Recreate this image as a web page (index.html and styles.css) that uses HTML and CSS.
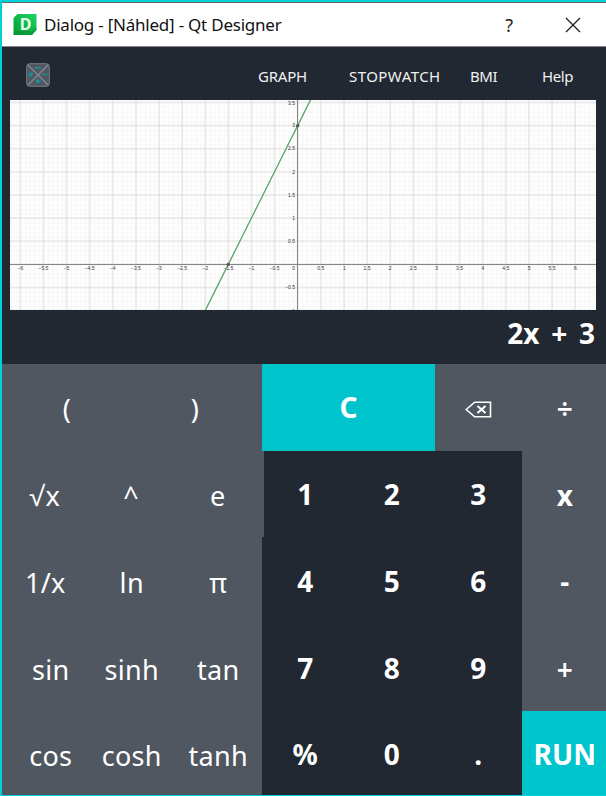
FILE: index.html
```html
<!DOCTYPE html>
<html lang="cs">
<head>
<meta charset="utf-8">
<title>Dialog</title>
<link rel="stylesheet" href="styles.css">
</head>
<body>
<div class="window">
  <header class="titlebar">
    <svg class="app-icon" width="24" height="22" viewBox="0 0 24 22">
      <defs><linearGradient id="g" x1="0" y1="1" x2="1" y2="0"><stop offset="0" stop-color="#009b2e"/><stop offset="1" stop-color="#1fd565"/></linearGradient></defs>
      <path d="M4.5 0H23.5V16L19 21H.5V4Z" fill="url(#g)"/>
      <path d="M.5 20L4 17H19L23.5 13V16L19 21H.5Z" fill="#078a38" opacity=".5"/>
      <text class="app-letter" x="6.8" y="16">D</text>
    </svg>
    <h1 class="title">Dialog - [Náhled] - Qt Designer</h1>
    <span class="help">?</span>
    <svg class="close" width="16" height="16" viewBox="0 0 16 16"><path d="M1 1L15 15M15 1L1 15" stroke="#222" stroke-width="1.3"/></svg>
  </header>
  <nav class="menu">
    <svg class="calc-icon" width="24" height="24" viewBox="0 0 24 24">
      <rect x=".7" y=".7" width="22.6" height="22.6" rx="3" fill="#505761" stroke="#777d86"/>
      <path d="M2 2L22 22M22 2L2 22" stroke="#858a91" stroke-width="1.3"/>
      <path d="M9 4.8H15M16 11.5H21.5M9.5 18H14.5M12 15.5V20.5M3 9.5L6.5 13.5M6.5 9.5L3 13.5" stroke="#15959f" stroke-width="1.6"/>
    </svg>
    <span class="item graph-item">GRAPH</span>
    <span class="item watch-item">STOPWATCH</span>
    <span class="item bmi-item">BMI</span>
    <span class="item help-item">Help</span>
  </nav>
  <svg class="plot" width="585.5" height="209.7" viewBox="0 0 585.5 209.7">
    <defs>
      <pattern id="minor" x="287.7" y="164.3" width="4.624" height="4.624" patternUnits="userSpaceOnUse"><path d="M0 0H4.624M0 0V4.624" stroke="#f1f1f1" stroke-width="1"/></pattern>
      <pattern id="major" x="276.14" y="152.74" width="23.12" height="23.12" patternUnits="userSpaceOnUse"><path d="M0 11.56H23.12M11.56 0V23.12" stroke="#dcdcdc" stroke-width="1"/></pattern>
    </defs>
    <rect width="586" height="210" fill="#fefefe"/>
    <rect width="586" height="210" fill="url(#minor)"/>
    <rect width="586" height="210" fill="url(#major)"/>
    <path d="M0 164.5H586M287.5 0V210" stroke="#858585" stroke-width="1"/>
    <g class="x-labels">
      <text x="10.3" y="170">−6</text><text x="33.4" y="170">−5.5</text><text x="56.5" y="170">−5</text><text x="79.6" y="170">−4.5</text><text x="102.8" y="170">−4</text><text x="125.9" y="170">−3.5</text><text x="149" y="170">−3</text><text x="172.1" y="170">−2.5</text><text x="195.2" y="170">−2</text><text x="218.3" y="170">−1.5</text><text x="241.5" y="170">−1</text><text x="264.6" y="170">−0.5</text><text x="283.6" y="170">0</text><text x="310.8" y="170">0.5</text><text x="334.5" y="170">1</text><text x="357" y="170">1.5</text><text x="380.2" y="170">2</text><text x="403.3" y="170">2.5</text><text x="426.6" y="170">3</text><text x="449.5" y="170">3.5</text><text x="473" y="170">4</text><text x="495.8" y="170">4.5</text><text x="519.2" y="170">5</text><text x="542" y="170">5.5</text><text x="565.3" y="170">6</text>
    </g>
    <g class="y-labels">
      <text x="285" y="4.7">3.5</text><text x="285" y="27.4">3</text><text x="285" y="50.5">2.5</text><text x="285" y="73.6">2</text><text x="285" y="96.8">1.5</text><text x="285" y="119.9">1</text><text x="285" y="143">0.5</text><text x="285" y="189">−0.5</text><text x="285" y="212.7">−1</text>
    </g>
    <path d="M195.2 210.5L301.2 -1.5" stroke="#55a066" stroke-width="1.3"/>
    <circle cx="218.3" cy="164.4" r="1.7" fill="#555"/><circle cx="287.7" cy="25.7" r="1.7" fill="#555"/>
  </svg>
  <div class="display">2x + 3</div>
  <main class="keys">
    <section class="functions">
      <div class="row pair"><span>(</span><span class="close-paren">)</span></div>
      <div class="row wide"><span>√x</span><span class="caret">^</span><span>e</span></div>
      <div class="row"><span>1/x</span><span>ln</span><span>π</span></div>
      <div class="row"><span class="shift">sin</span><span>sinh</span><span>tan</span></div>
      <div class="row"><span class="shift">cos</span><span>cosh</span><span>tanh</span></div>
    </section>
    <section class="numbers">
      <span class="clear accent">C</span>
      <span class="op"><svg width="27" height="17" viewBox="0 0 27 17"><path d="M1.2 8.5L9.7 1.2H25.5V15.8H9.7Z" fill="none" stroke="#fff" stroke-width="1.6"/><path d="M12.5 5L20.5 12M20.5 5L12.5 12" stroke="#fff" stroke-width="2.1"/></svg></span>
      <span class="op sign">÷</span>
      <span>1</span><span>2</span><span>3</span><span class="op letter">x</span>
      <span>4</span><span>5</span><span>6</span><span class="op minus">-</span>
      <span>7</span><span>8</span><span>9</span><span class="op sign">+</span>
      <span>%</span><span>0</span><span>.</span><span class="run accent">RUN</span>
    </section>
  </main>
</div>
</body>
</html>
```
FILE: styles.css
```css
* { box-sizing: border-box; }
body { margin: 0; background: #222831; font-family: "Noto Sans", "Open Sans", sans-serif; }
.window { width: 606px; height: 796px; overflow: hidden; border: solid #00d1d9; border-width: 2px 0 1px 2px; background: #222831; display: flex; flex-direction: column; }
.titlebar { height: 45px; flex: none; display: flex; align-items: center; background: #fff; border-top: 1px solid #5e6a6d; border-bottom: 1px solid #84888c; padding: 0 25px 0 11px; }
.app-letter { font: bold 16px "Noto Sans", sans-serif; fill: #e4ffe9; }
.title { margin: 0 0 0 7px; font-size: 17px; font-weight: 400; color: #111; letter-spacing: -.23px; white-space: nowrap; }
.help { margin-left: auto; font-size: 18px; color: #222; }
.close { margin-left: 52px; }
.menu { height: 53px; flex: none; display: flex; align-items: center; padding: 4px 0 0 24px; color: #f1f1f1; font-size: 15px; letter-spacing: -.4px; }
.calc-icon { margin-top: -2px; }
.item { white-space: nowrap; flex: none; }
.graph-item { margin-left: 208px; width: 91px; letter-spacing: -.2px; }
.watch-item { width: 121px; letter-spacing: .45px; }
.bmi-item { width: 72px; }
.plot { display: block; flex: none; margin-left: 8px; }
.x-labels, .y-labels { font: 5px "Liberation Sans", sans-serif; fill: #333; }
.x-labels { text-anchor: middle; }
.y-labels { text-anchor: end; }
.display { height: 54.3px; flex: none; text-align: right; padding-right: 11px; color: #fff; font-size: 28px; font-weight: 700; line-height: 46px; word-spacing: 4.5px; }
.keys { flex: 1; display: flex; color: #fff; }
.functions { position: relative; width: 262px; flex: none; font-size: 27px; letter-spacing: .3px; }
.row { width: 260px; height: 86.75px; display: flex; background: #505761; padding-top: 3px; }
.row span { width: 86.5px; flex: none; display: flex; align-items: center; justify-content: center; }
.row.wide { width: 262px; letter-spacing: 1.5px; }
.row.pair span { width: 130px; }
.row .shift { padding-left: 11px; }
.row .close-paren { padding-right: 4px; }
.numbers { margin-left: -2px; width: 346px; display: grid; grid-template-columns: 86.5px 86.5px 86.5px 86.5px; grid-template-rows: repeat(5, 86.75px); font-size: 28px; font-weight: 700; }
.numbers span { display: flex; align-items: center; justify-content: center; }
.numbers .clear { grid-column: span 2; }
.numbers .accent { background: #00c4cc; }
.numbers .op { background: #505761; padding-top: 4px; }
.numbers .letter { padding-top: 2px; }
.numbers .minus { padding-top: 0; }
.numbers .sign { font-weight: 600; padding-top: 2px; }
```
